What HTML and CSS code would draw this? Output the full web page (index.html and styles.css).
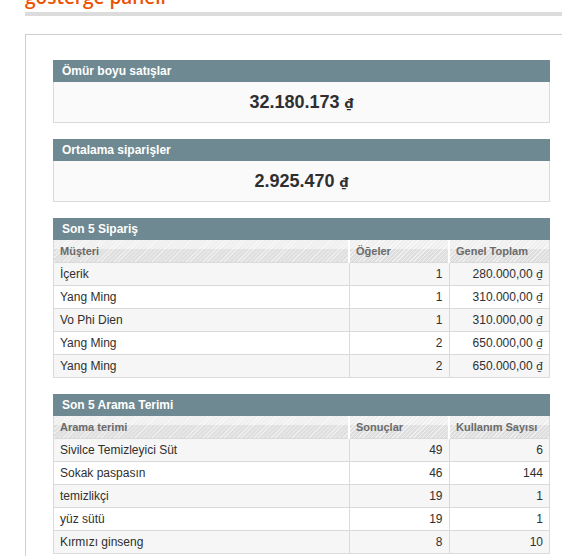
FILE: index.html
```html
<!DOCTYPE html>
<html lang="tr">
<head>
  <meta charset="UTF-8" />
  <meta name="viewport" content="width=device-width, initial-scale=1.0"/>
  <title>Gösterge Paneli</title>
  <link rel="stylesheet" href="styles.css">
</head>
<body>

  <div class="page">
    <h1 class="page-title">gösterge paneli</h1>
    <div class="title-bar"></div>

    <div class="dashboard">

      <div class="box">
        <div class="box-head">Ömür boyu satışlar</div>
        <div class="box-value">32.180.173 <span class="cur">₫</span></div>
      </div>

      <div class="box">
        <div class="box-head">Ortalama siparişler</div>
        <div class="box-value">2.925.470 <span class="cur">₫</span></div>
      </div>

      <div class="box">
        <div class="box-head">Son 5 Sipariş</div>
        <table class="grid">
          <thead>
            <tr><th>Müşteri</th><th class="c2">Öğeler</th><th class="c3">Genel Toplam</th></tr>
          </thead>
          <tbody>
            <tr><td>İçerik</td><td class="num">1</td><td class="num">280.000,00 <span class="cur">₫</span></td></tr>
            <tr><td>Yang Ming</td><td class="num">1</td><td class="num">310.000,00 <span class="cur">₫</span></td></tr>
            <tr><td>Vo Phi Dien</td><td class="num">1</td><td class="num">310.000,00 <span class="cur">₫</span></td></tr>
            <tr><td>Yang Ming</td><td class="num">2</td><td class="num">650.000,00 <span class="cur">₫</span></td></tr>
            <tr><td>Yang Ming</td><td class="num">2</td><td class="num">650.000,00 <span class="cur">₫</span></td></tr>
          </tbody>
        </table>
      </div>

      <div class="box">
        <div class="box-head">Son 5 Arama Terimi</div>
        <table class="grid">
          <thead>
            <tr><th>Arama terimi</th><th class="c2">Sonuçlar</th><th class="c3">Kullanım Sayısı</th></tr>
          </thead>
          <tbody>
            <tr><td>Sivilce Temizleyici Süt</td><td class="num">49</td><td class="num">6</td></tr>
            <tr><td>Sokak paspasın</td><td class="num">46</td><td class="num">144</td></tr>
            <tr><td>temizlikçi</td><td class="num">19</td><td class="num">1</td></tr>
            <tr><td>yüz sütü</td><td class="num">19</td><td class="num">1</td></tr>
            <tr><td>Kırmızı ginseng</td><td class="num">8</td><td class="num">10</td></tr>
          </tbody>
        </table>
      </div>

    </div>
  </div>

</body>
</html>
```

FILE: styles.css
```css
html, body {
  margin: 0;
  overflow: hidden;
}

body {
  font-family: "Liberation Sans", Arial, sans-serif;
  font-size: 12px;
  color: #2f2f2f;
  background: #fff;
}

.page {
  padding-left: 25px;
  width: 620px;
}

/* page is scrolled: only the foot of the title shows */
.page-title {
  margin: -13px 0 0;
  height: 21px;
  font-family: "Open Sans", sans-serif;
  font-size: 19px;
  font-weight: 600;
  line-height: 21px;
  color: #eb5202;
}

.title-bar {
  height: 4px;
  margin-top: 4px;
  background: #dcdcdc;
}

.dashboard {
  margin-top: 18px;
  border: 1px solid #cfcfcf;
  border-right: none;
  padding: 25px 0 0 27px;
}

.box {
  width: 497px;
  margin-bottom: 16px;
}

.box-head {
  height: 22px;
  line-height: 22px;
  padding-left: 9px;
  background: #6f8992;
  color: #fff;
  font-weight: bold;
  font-size: 12px;
}

.box-value {
  height: 40px;
  line-height: 40px;
  border: 1px solid #dadada;
  border-top: none;
  background: #fafafa;
  text-align: center;
  font-size: 18px;
  font-weight: bold;
  color: #2f2f2f;
}

.cur {
  font-family: "DejaVu Sans", sans-serif;
  font-weight: normal;
  font-size: 11px;
}

.box-value .cur {
  font-weight: bold;
  font-size: 13px;
}

.grid {
  width: 100%;
  border-collapse: collapse;
  border: 1px solid #dadada;
  border-top: none;
  table-layout: fixed;
}

.grid th {
  height: 22px;
  padding: 0 6px;
  text-align: left;
  font-size: 11px;
  font-weight: bold;
  color: #6b6b6b;
  border-left: 2px solid #fff;
  border-bottom: 1px solid #dadada;
  background:
    repeating-linear-gradient(135deg, rgba(255, 255, 255, 0.55) 0 1px, transparent 1px 3px),
    linear-gradient(#efefef 0 40%, #dedede 40% 100%);
}

.grid th:first-child {
  border-left: none;
}

.grid .c2 {
  width: 86px;
}

.grid .c3 {
  width: 87px;
}

.grid td {
  height: 22px;
  padding: 0 6px;
  border-left: 1px solid #dadada;
  border-bottom: 1px solid #dadada;
  font-size: 12px;
  white-space: nowrap;
}

.grid td:first-child {
  border-left: none;
}

.grid tbody tr:nth-child(odd) td {
  background: #f6f6f6;
}

.grid tbody tr:nth-child(even) td {
  background: #fff;
}

.grid .num {
  text-align: right;
}
```
